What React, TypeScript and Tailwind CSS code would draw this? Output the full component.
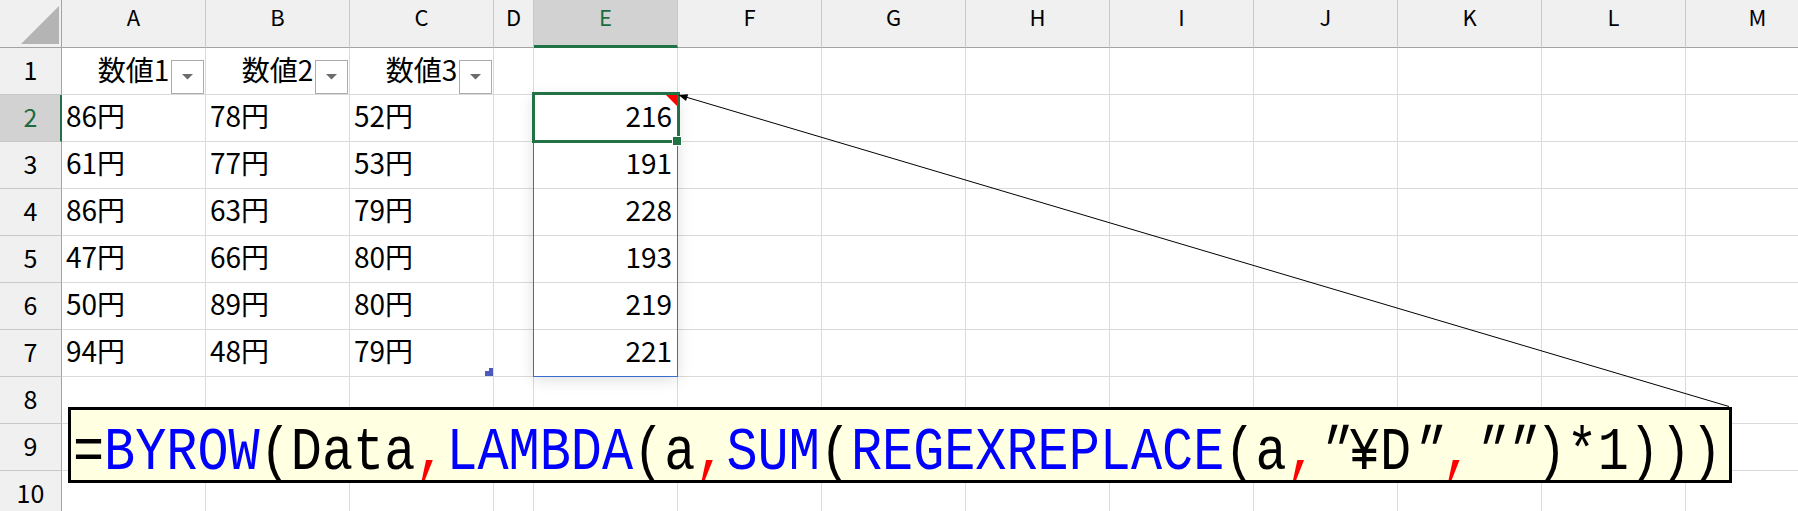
// Excel-style sheet: a small table of 円 values, a spilled BYROW result in
// column E and a comment callout that shows the formula behind it.

const JP = "font-['Noto_Sans_CJK_JP','Noto_Sans',sans-serif]";

const COLUMNS = [
  { id: "A", w: "w-[144px]" },
  { id: "B", w: "w-[144px]" },
  { id: "C", w: "w-[144px]" },
  { id: "D", w: "w-[40px]" },
  { id: "E", w: "w-[144px]" },
  { id: "F", w: "w-[144px]" },
  { id: "G", w: "w-[144px]" },
  { id: "H", w: "w-[144px]" },
  { id: "I", w: "w-[144px]" },
  { id: "J", w: "w-[144px]" },
  { id: "K", w: "w-[144px]" },
  { id: "L", w: "w-[144px]" },
  { id: "M", w: "w-[144px]" },
];

// A, B, C, E per row; row 1 is the table header
const DATA: Record<number, { A?: string; B?: string; C?: string; E?: string }> = {
  1: { A: "数値1", B: "数値2", C: "数値3" },
  2: { A: "86円", B: "78円", C: "52円", E: "216" },
  3: { A: "61円", B: "77円", C: "53円", E: "191" },
  4: { A: "86円", B: "63円", C: "79円", E: "228" },
  5: { A: "47円", B: "66円", C: "80円", E: "193" },
  6: { A: "50円", B: "89円", C: "80円", E: "219" },
  7: { A: "94円", B: "48円", C: "79円", E: "221" },
};

const ROW_IDS = [1, 2, 3, 4, 5, 6, 7, 8, 9, 10];

type Tone = "k" | "b" | "r" | "q";
const FORMULA: [string, Tone][] = [
  ["=", "k"],
  ["BYROW", "b"],
  ["(Data", "k"],
  [",", "r"],
  ["LAMBDA", "b"],
  ["(a", "k"],
  [",", "r"],
  ["SUM", "b"],
  ["(", "k"],
  ["REGEXREPLACE", "b"],
  ["(a", "k"],
  [",", "r"],
  ['"', "q"],
  ["¥D", "k"],
  ['"', "q"],
  [",", "r"],
  ['"', "q"],
  ['"', "q"],
  [")*1)))", "k"],
];

export default function App() {
  return (
    <div className="relative h-[511px] w-[1798px] overflow-hidden bg-white text-black">
      <ColumnHeader />
      {ROW_IDS.map((r) => (
        <SheetRow key={r} row={r} />
      ))}

      {/* spill range E2:E7 */}
      <div className="absolute left-[533px] top-[94px] h-[283px] w-[145px] border border-[#3b6ccc] shadow-[0_3px_14px_rgba(0,0,0,0.13)]" />
      {/* active cell E2, with its comment marker and fill handle */}
      <div className="absolute left-[532px] top-[92px] h-[51px] w-[148px] border-[3px] border-[#217346]">
        <svg className="absolute right-0 top-0" width="11" height="11" viewBox="0 0 11 11">
          <polygon points="0,0 11,0 11,11" fill="#ff0000" />
        </svg>
        <div className="absolute -right-[5px] -bottom-[6px] h-[10px] w-[10px] border border-white bg-[#217346]" />
      </div>

      {/* comment connector */}
      <svg className="pointer-events-none absolute inset-0" width="1798" height="511">
        <line x1="1729" y1="406.5" x2="684" y2="96.5" stroke="#000" strokeWidth="1" />
        <polygon points="678.5,95 688.2,94.3 686,101" fill="#000" />
      </svg>

      <CommentBox />
    </div>
  );
}

function ColumnHeader() {
  return (
    <div className="flex h-[48px]">
      <div className="flex w-[62px] shrink-0 items-end justify-end border-r border-b border-[#a3a3a3] bg-[#f0f0f0] pr-[2px] pb-[3px]">
        <svg width="38" height="38" viewBox="0 0 38 38">
          <polygon points="0,38 38,0 38,38" fill="#b4b4b4" />
        </svg>
      </div>
      {COLUMNS.map((c) => {
        const active = c.id === "E";
        return (
          <div
            key={c.id}
            className={
              active
                ? `${c.w} shrink-0 border-r border-r-[#c8c8c8] border-b-[3px] border-b-[#217346] bg-[#d2d2d2] text-center text-[22px] leading-[33px] text-[#1d6b3f] ${JP}`
                : `${c.w} shrink-0 border-r border-r-[#c8c8c8] border-b border-b-[#a3a3a3] bg-[#f0f0f0] text-center text-[22px] leading-[33px] text-black ${JP}`
            }
          >
            {c.id}
          </div>
        );
      })}
    </div>
  );
}

function SheetRow({ row }: { row: number }) {
  const active = row === 2;
  const values = DATA[row] ?? {};
  return (
    <div className="flex h-[47px]">
      <div
        className={
          active
            ? `w-[62px] shrink-0 border-r-[2px] border-r-[#217346] border-b border-b-[#c8c8c8] bg-[#d2d2d2] pl-[1px] text-center text-[25px] leading-[42px] text-[#1d6b3f] ${JP}`
            : `w-[62px] shrink-0 border-r border-r-[#a3a3a3] border-b border-b-[#c8c8c8] bg-[#f0f0f0] text-center text-[25px] leading-[42px] text-black ${JP}`
        }
      >
        {row}
      </div>
      {COLUMNS.map((c) => {
        const v = values[c.id as "A" | "B" | "C" | "E"];
        if (row === 1 && v) {
          return (
            <div
              key={c.id}
              className={`${c.w} relative shrink-0 border-r border-b border-[#dadada] text-center text-[28px] leading-[43px] ${JP}`}
            >
              {v}
              <FilterButton />
            </div>
          );
        }
        return (
          <div
            key={c.id}
            className={
              c.id === "E"
                ? `${c.w} shrink-0 border-r border-b border-[#dadada] pr-[5px] text-right text-[28px] leading-[40px] ${JP}`
                : `${c.w} relative shrink-0 border-r border-b border-[#dadada] pl-[4px] text-left text-[28px] leading-[40px] ${JP}`
            }
          >
            {v}
            {row === 7 && c.id === "C" && <TableHandle />}
          </div>
        );
      })}
    </div>
  );
}

function TableHandle() {
  return (
    <svg className="absolute right-0 bottom-0" width="8" height="8" viewBox="0 0 8 8">
      <polygon points="4,0 8,0 8,8 0,8 0,3 4,3" fill="#4a5bbd" />
    </svg>
  );
}

function FilterButton() {
  return (
    <div className="absolute right-[1px] bottom-0 flex h-[34px] w-[33px] items-center justify-center border border-[#ababab] bg-white">
      <svg width="11" height="6" viewBox="0 0 11 6">
        <polygon points="0,0 11,0 5.5,5.5" fill="#6b6b6b" />
      </svg>
    </div>
  );
}

function CommentBox() {
  return (
    <div className="absolute left-[68px] top-[407px] h-[76px] w-[1664px] overflow-visible border-[3px] border-black bg-[#ffffe1]">
      <span className="ml-[2px] inline-block origin-left scale-x-[0.85] whitespace-pre pt-[12px] font-['Liberation_Mono',monospace] text-[61px] leading-[61px]">
        {FORMULA.map(([t, tone], i) =>
          tone === "q" ? (
            <span key={i} className="inline-block -skew-x-[18deg] text-black">
              {t}
            </span>
          ) : (
            <span
              key={i}
              className={tone === "b" ? "text-[#0000ff]" : tone === "r" ? "text-[#ff0000]" : "text-black"}
            >
              {t}
            </span>
          ),
        )}
      </span>
    </div>
  );
}
